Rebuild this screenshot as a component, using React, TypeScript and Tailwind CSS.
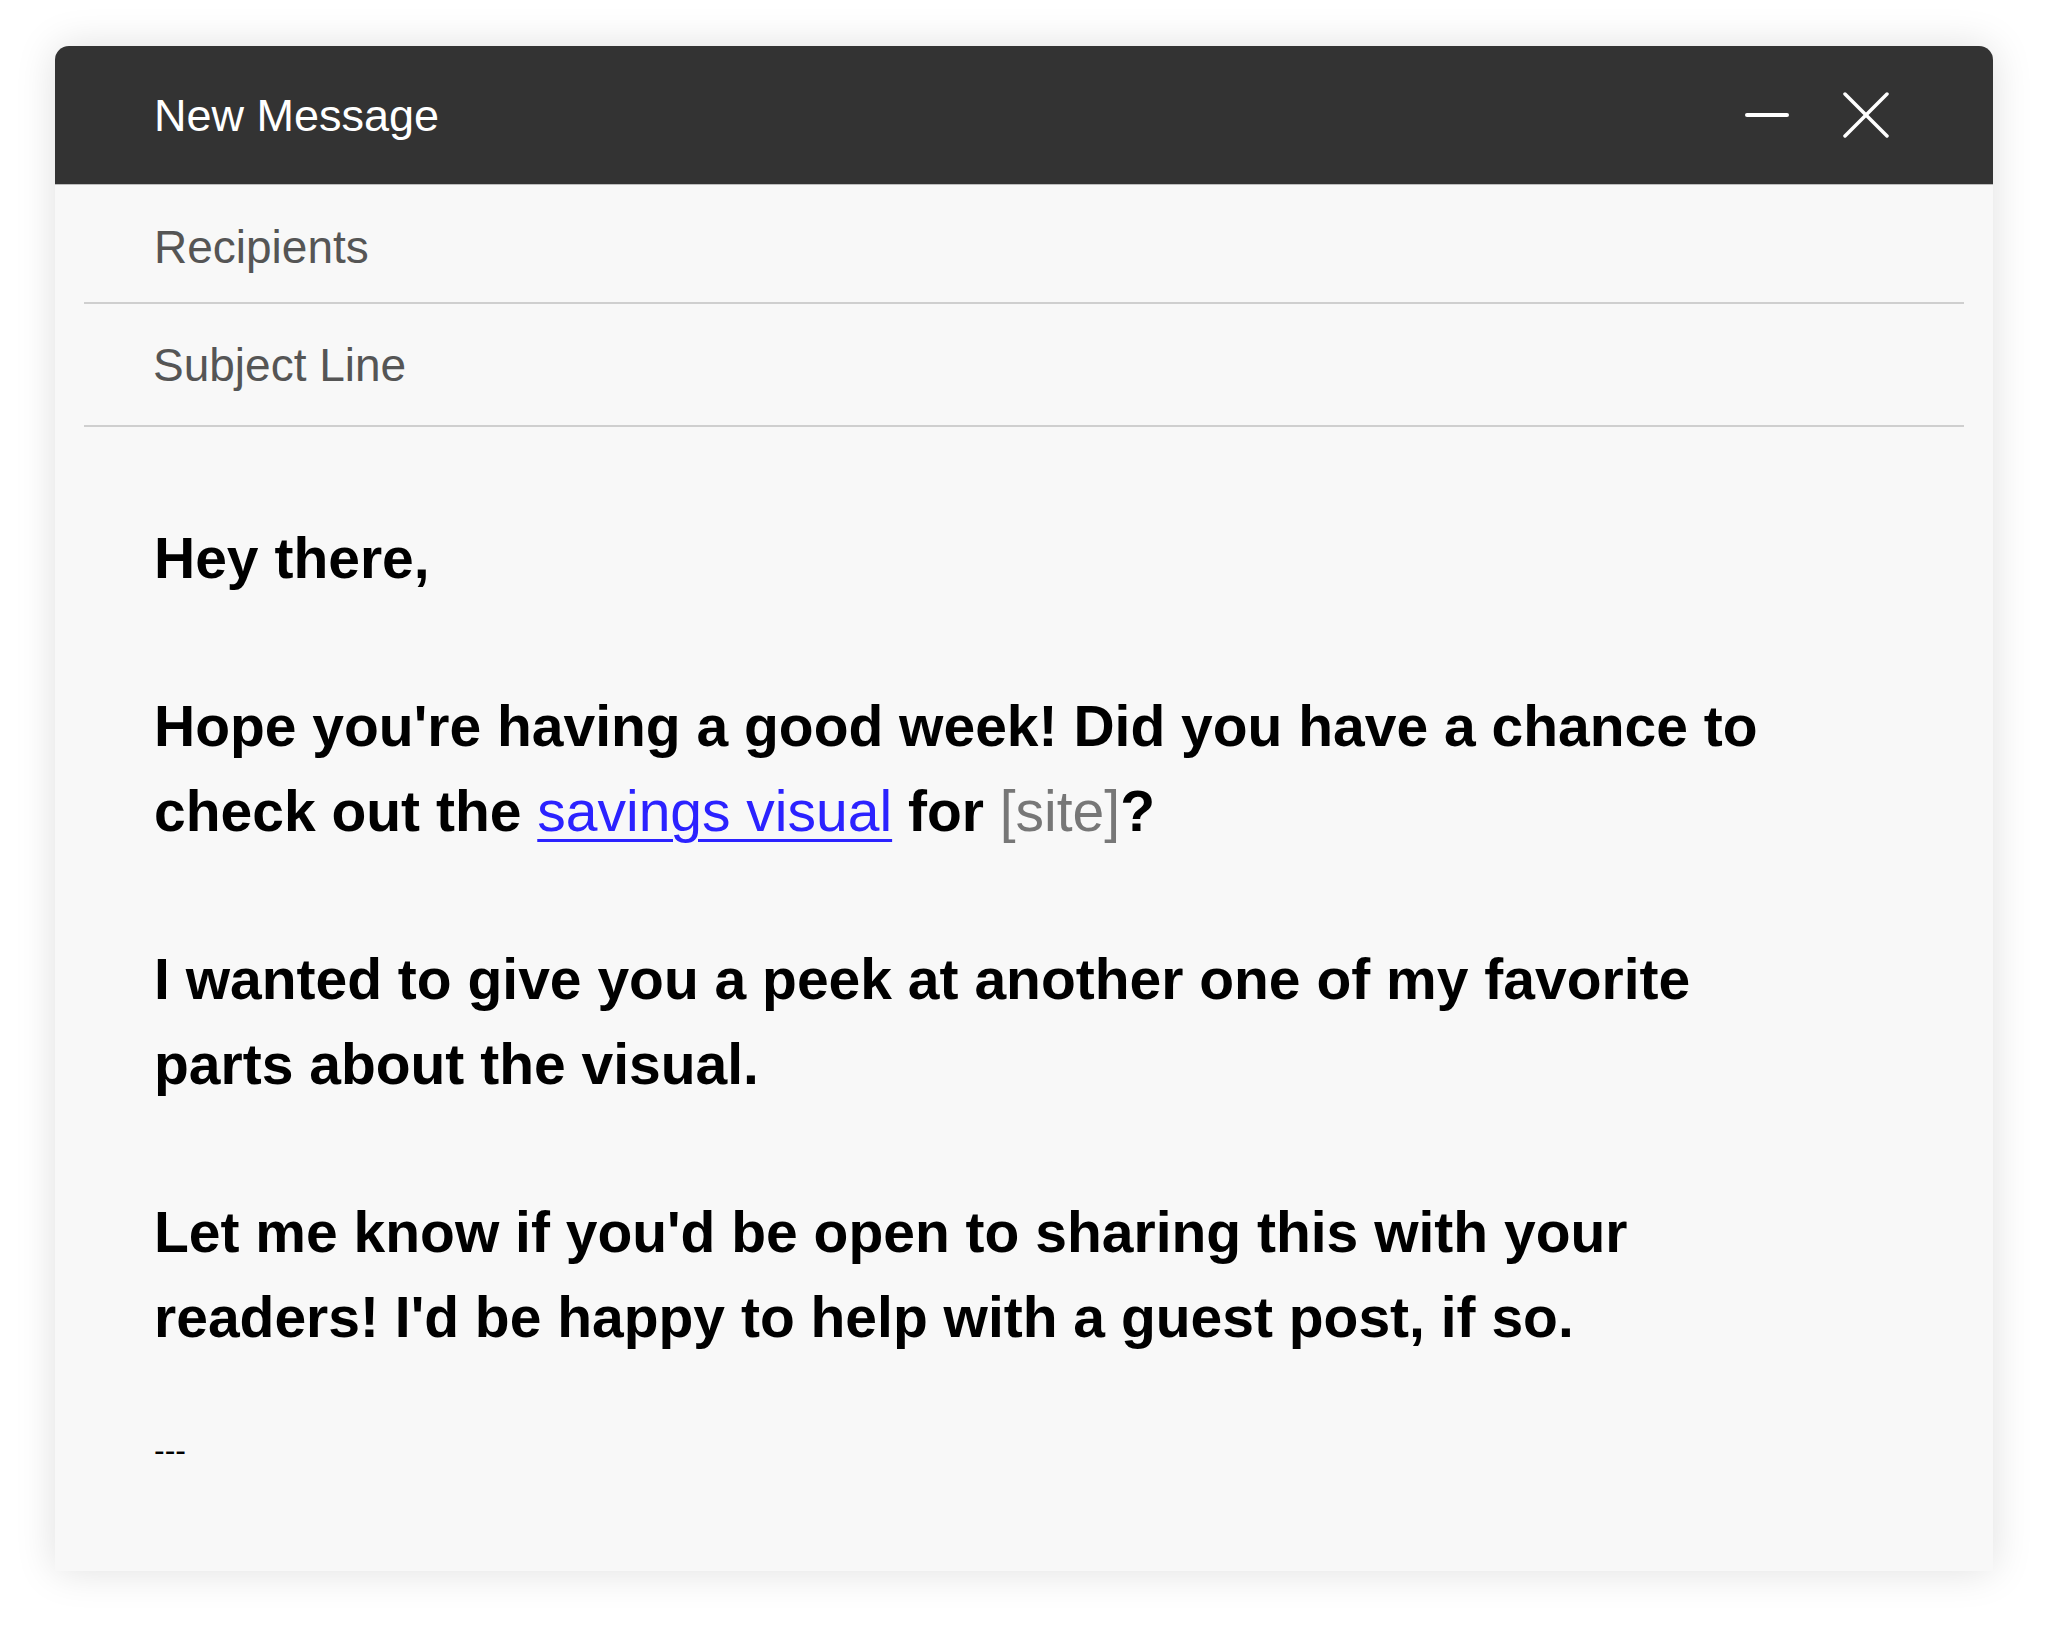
import React from 'react';

const MinusIcon = () => (
  <svg width="44" height="8" viewBox="0 0 44 8" fill="none">
    <line x1="2" y1="4" x2="42" y2="4" stroke="#ffffff" strokeWidth="4" strokeLinecap="round" />
  </svg>
);

const CloseIcon = () => (
  <svg width="48" height="46" viewBox="0 0 48 46" fill="none">
    <line x1="3" y1="2" x2="45" y2="44" stroke="#ffffff" strokeWidth="3.5" strokeLinecap="round" />
    <line x1="45" y1="2" x2="3" y2="44" stroke="#ffffff" strokeWidth="3.5" strokeLinecap="round" />
  </svg>
);

export default function App() {
  return (
    <div className="w-[2048px] h-[1626px] bg-white pt-[46px] pl-[55px] font-['Liberation_Sans',Arial,sans-serif]">
      <div className="w-[1938px] h-[1525px] bg-[#f8f8f8] rounded-t-[14px] shadow-[0_0_40px_rgba(0,0,0,0.13)] flex flex-col">
        {/* Title bar */}
        <div className="h-[139px] bg-[#333333] rounded-t-[14px] flex items-center justify-between pl-[99px] pr-[103px] border-b border-[#bdbdbd]">
          <span className="text-white text-[45px] leading-none">New Message</span>
          <div className="flex items-center gap-[53px]">
            <MinusIcon />
            <CloseIcon />
          </div>
        </div>

        {/* Fields */}
        <div className="mx-[29px] h-[119px] border-b-2 border-[#cfcfcf] flex items-center pl-[70px] pt-[6px]">
          <span className="text-[#555555] text-[46px] leading-none">Recipients</span>
        </div>
        <div className="mx-[29px] h-[123px] border-b-2 border-[#cfcfcf] flex items-center pl-[69px]">
          <span className="text-[#555555] text-[46px] leading-none">Subject Line</span>
        </div>

        {/* Body */}
        <div className="pl-[99px] pt-[89px] text-black text-[57px] leading-[85px] font-bold">
          <p className="mb-[83px]">Hey there,</p>
          <p className="mb-[83px]">
            Hope you're having a good week! Did you have a chance to
            <br />
            check out the{' '}
            <a href="#" className="text-[#2b22ff] font-normal underline decoration-[3px] underline-offset-[8px]">
              savings visual
            </a>{' '}
            for <span className="text-[#777777] font-normal">[site]</span>?
          </p>
          <p className="mb-[83px]">
            I wanted to give you a peek at another one of my favorite
            <br />
            parts about the visual.
          </p>
          <p>
            Let me know if you'd be open to sharing this with your
            <br />
            readers! I'd be happy to help with a guest post, if so.
          </p>
          <p className="mt-[70px] text-[32px] leading-[40px] font-normal">---</p>
        </div>
      </div>
    </div>
  );
}
